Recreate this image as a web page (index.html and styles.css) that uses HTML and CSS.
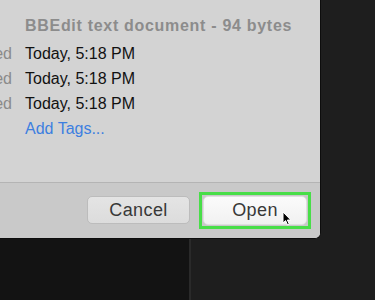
FILE: index.html
```html
<!DOCTYPE html>
<html lang="en">
<head>
  <meta charset="UTF-8">
  <meta name="viewport" content="width=device-width, initial-scale=1.0">
  <title>Open File</title>
  <link rel="stylesheet" href="styles.css">
</head>
<body>
  <div class="dialog">
    <section class="info">
      <div class="kind">BBEdit text document - 94 bytes</div>
      <div class="meta">
        <span class="label">Created</span><span class="value">Today, 5:18 PM</span>
        <span class="label">Modified</span><span class="value">Today, 5:18 PM</span>
        <span class="label">Last opened</span><span class="value">Today, 5:18 PM</span>
        <span class="label"></span><a class="tags" href="#">Add Tags...</a>
      </div>
    </section>
    <footer class="actions">
      <button class="btn">Cancel</button>
      <span class="focus-ring">
        <button class="btn btn-open">Open
          <svg class="cursor" width="10" height="15" viewBox="0 0 10 15">
            <path d="M1 1 L1 12 L3.6 9.6 L5.6 14 L7.3 13.2 L5.4 9 L8.8 9 Z" fill="#000" stroke="#fff" stroke-width="1"/>
          </svg>
        </button>
      </span>
    </footer>
  </div>
  <div class="desk">
    <div class="window-behind"></div>
  </div>
</body>
</html>
```

FILE: styles.css
```css
body {
  margin: 0;
  width: 375px;
  height: 300px;
  overflow: hidden;
  background-color: #1e1e1e;
  font-family: "Liberation Sans", Arial, sans-serif;
}
.dialog {
  width: 320px;
  height: 238px;
  display: flex;
  flex-direction: column;
  background-color: #d3d3d3;
  border-right: 1px solid #0d0d0d;
  border-bottom: 1px solid #0d0d0d;
  border-bottom-right-radius: 6px;
  overflow: hidden;
}
.info {
  height: 183px;
  box-sizing: border-box;
  padding: 12px 0 0 25px;
  border-bottom: 1px solid #b4b4b4;
}
.kind {
  font-size: 16px;
  font-weight: bold;
  letter-spacing: 0.7px;
  line-height: 28px;
  color: #8c8c8c;
}
.meta {
  display: grid;
  grid-template-columns: 100px auto;
  column-gap: 13px;
  margin-left: -113px;
  padding-top: 1px;
  font-size: 16px;
  line-height: 25px;
}
.label {
  text-align: right;
  color: #8a8a8a;
}
.value {
  color: #111;
}
.tags {
  color: #3d7fe0;
  text-decoration: none;
}
.actions {
  flex: 1;
  display: flex;
  justify-content: flex-end;
  align-items: flex-start;
  gap: 9px;
  padding: 9px 9px 0 0;
  background-color: #c9c9c9;
}
.btn {
  position: relative;
  width: 103px;
  height: 28px;
  margin-top: 4px;
  padding: 0;
  font-family: "Liberation Sans", Arial, sans-serif;
  font-size: 18px;
  letter-spacing: 0.4px;
  color: #383838;
  background: linear-gradient(#e4e4e4, #dcdcdc);
  border: 1px solid #bcbcbc;
  border-radius: 5px;
}
.focus-ring {
  display: flex;
  padding: 1px;
  border: 3px solid #48de48;
}
.btn-open {
  width: 104px;
  height: 29px;
  margin-top: 0;
  background: linear-gradient(#fbfbfb, #f1f1f1);
  border-color: #e0e0e0;
}
.cursor {
  position: absolute;
  left: 78px;
  top: 14px;
}
.desk {
  height: 61px;
}
.window-behind {
  width: 189px;
  height: 100%;
  background-color: #131313;
  border-right: 2px solid #2a2a2a;
}
```
